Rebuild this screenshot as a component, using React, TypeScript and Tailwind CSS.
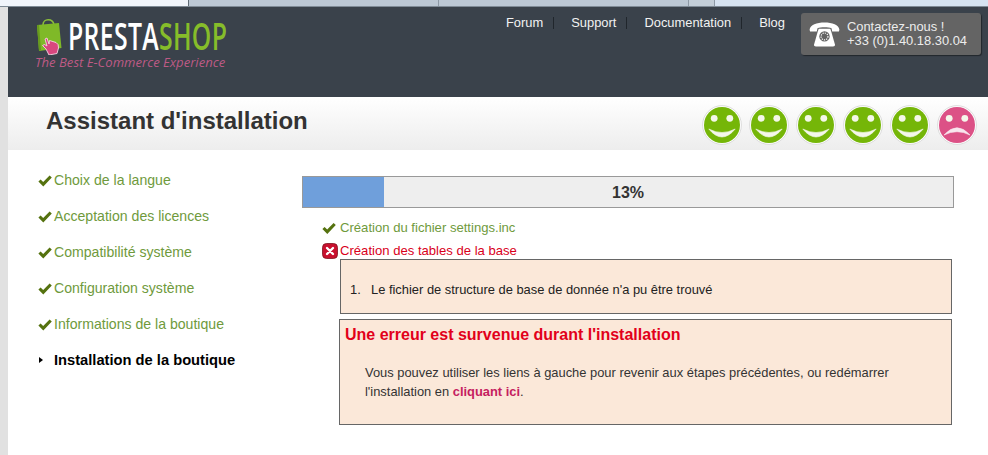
import React from "react";

const Check = ({ className = "" }: { className?: string }) => (
  <svg viewBox="0 0 14 12" className={className}>
    <path d="M0.4 6.6 L2.6 4.4 L5.2 7 L11.6 0.4 L13.8 2.4 L5.3 11.6 Z" fill="#55720f" />
  </svg>
);

const Face = ({ sad = false }: { sad?: boolean }) => (
  <svg viewBox="0 0 40 40" className="h-10 w-10 shrink-0">
    <circle cx="20" cy="20" r="19.4" fill="#ffffff" stroke="#d4d4d4" strokeWidth="0.8" />
    <circle cx="20" cy="20" r="18" fill={sad ? "#dc5186" : "#75b608"} />
    <circle cx="12.2" cy="13.3" r="3.4" fill="#f4f7ea" />
    <circle cx="27.8" cy="13.3" r="3.4" fill="#f4f7ea" />
    {sad ? (
      <path d="M7 30 Q20 15.4 33 30 Q20 23.4 7 30 Z" fill="#f8e6ee" stroke="#f8e6ee" strokeWidth="0.6" strokeLinejoin="round" />
    ) : (
      <path d="M6.8 24 Q20 31 33.2 24 Q20 40 6.8 24 Z" fill="#f4f7ea" stroke="#f4f7ea" strokeWidth="0.6" strokeLinejoin="round" />
    )}
  </svg>
);

const Bag = () => (
  <svg viewBox="0 0 30 38" className="h-[38px] w-[30px] shrink-0">
    <path d="M9 8 C9 1 19 1 20 8" fill="none" stroke="#8cbf3a" strokeWidth="1.6" />
    <path d="M3 8 L25 6 L27.5 31 L5 34 Z" fill="#7fb928" />
    <path d="M3 8 L5 8 L7 33 L5 34 Z" fill="#679a1d" />
    <path
      d="M11 22 L13 21 L15 27 L15.5 23.5 L22 25.5 Q25 27 24.5 31 L23 36.5 L15 38 L12 32 L8.5 28.5 L10.5 27.5 L13 29 Z"
      fill="#d9477f"
      stroke="#f4d6e2"
      strokeWidth="0.9"
    />
  </svg>
);

const Phone = () => (
  <svg viewBox="0 0 32 26" className="h-[25px] w-[31px] shrink-0">
    <path
      d="M0.5 8 C1 3 8 0.5 16 0.5 C24 0.5 31 3 31.5 8 L31 10 L24 10 L23.3 6.5 C20 5 12 5 8.7 6.5 L8 10 L1 10 Z"
      fill="#ffffff"
    />
    <path d="M10 7 L22 7 L23 10 L27 24 Q27 25.5 25 25.5 L7 25.5 Q5 25.5 5 24 L9 10 Z" fill="#ffffff" />
    <circle cx="16" cy="15" r="5.4" fill="#646464" />
    <circle cx="16" cy="15" r="3.6" fill="none" stroke="#ffffff" strokeWidth="1.2" strokeDasharray="1.4 1" />
  </svg>
);

const ErrorIcon = () => (
  <svg viewBox="0 0 16 16" className="h-4 w-4 shrink-0">
    <rect x="0.5" y="0.5" width="15" height="15" rx="4" fill="#c8102e" stroke="#7d1420" strokeWidth="0.8" />
    <path d="M5 5 L11 11 M11 5 L5 11" stroke="#ffffff" strokeWidth="2.4" strokeLinecap="round" />
  </svg>
);

const steps = [
  "Choix de la langue",
  "Acceptation des licences",
  "Compatibilité système",
  "Configuration système",
  "Informations de la boutique",
];

const nav = ["Forum", "Support", "Documentation", "Blog"];

export default function App() {
  return (
    <div className="flex h-[455px] w-[988px] flex-col overflow-hidden bg-white font-['Liberation_Sans',Arial,sans-serif]">
      {/* browser chrome leftover */}
      <div className="flex h-[7px] shrink-0 border-b border-[#7f8b96]">
        <div className="w-[188px] bg-[#f1f5fb]" />
        <div className="w-[250px] border-l border-[#5f6a74] bg-[#bcc8d4]" />
        <div className="w-[250px] border-l border-[#8d99a5] bg-[#bcc8d4]" />
        <div className="w-[27px] border-x border-[#8d99a5] bg-[#c3ced8]" />
        <div className="flex-1 bg-[#d6e3f1]" />
      </div>

      <div className="flex min-h-0 flex-1">
        <div className="w-2 shrink-0 bg-[#e1e1e1]" />
        <div className="flex min-w-0 flex-1 flex-col">
          {/* header */}
          <header className="flex h-[90px] shrink-0 bg-[#3a424b]">
            <div className="ml-[26px] mt-[10px] flex w-[204px] shrink-0 flex-col">
              <div className="flex h-[38px]">
                <Bag />
                <div className="ml-[4px] mt-[-1px] flex h-[38px] origin-left scale-x-[0.67] items-center whitespace-nowrap font-['Open_Sans',sans-serif] text-[37px] font-semibold leading-none tracking-[0.5px]">
                  <span className="text-white">PRESTA</span>
                  <span className="text-[#86bd2a]">SHOP</span>
                </div>
              </div>
              <div className="ml-px mt-0 whitespace-nowrap font-['Open_Sans',sans-serif] text-[13.1px] italic leading-[14px] text-[#bd5a85]">
                The Best E-Commerce Experience
              </div>
            </div>
            <nav className="ml-[268px] mt-[8px] flex h-[15px] items-center text-[12.9px] leading-[15px] text-[#f2f2f2]">
              {nav.map((n, i) => (
                <React.Fragment key={n}>
                  {i > 0 && <span className="ml-[10px] mr-[17px] h-[12px] w-px bg-[#20262c]" />}
                  <span>{n}</span>
                </React.Fragment>
              ))}
            </nav>
            <div className="ml-[16px] mt-[6px] flex h-[42px] w-[180px] items-center rounded-[3px] bg-[#646464] pl-[8px] shadow-[1px_1px_1px_#22272c]">
              <Phone />
              <div className="ml-[7px] whitespace-nowrap text-[12.9px] leading-[14px] text-[#ececec]">
                <div>Contactez-nous !</div>
                <div>+33 (0)1.40.18.30.04</div>
              </div>
            </div>
          </header>

          {/* title band */}
          <div className="flex h-[53px] shrink-0 items-center bg-gradient-to-b from-white to-[#ededed] pl-[38px] pr-[11px]">
            <h1 className="mt-[-6px] flex-1 text-[24px] font-bold leading-7 text-[#333333]">Assistant d'installation</h1>
            <div className="mt-[3px] flex gap-[7px]">
              <Face />
              <Face />
              <Face />
              <Face />
              <Face />
              <Face sad />
            </div>
          </div>

          {/* body */}
          <div className="flex min-h-0 flex-1">
            <aside className="w-[294px] shrink-0 pl-[30px] pt-[13px]">
              {steps.map((s) => (
                <div key={s} className="flex h-9 items-center text-[14.1px] text-[#6f9a3c]">
                  <Check className="mr-[2px] h-[12px] w-[14px] shrink-0" />
                  <span>{s}</span>
                </div>
              ))}
              <div className="mt-[-1px] flex h-9 items-center text-[14.7px] font-bold text-black">
                <span className="ml-[1px] mr-[11px] h-0 w-0 border-y-[3px] border-l-[4px] border-y-transparent border-l-black" />
                <span>Installation de la boutique</span>
              </div>
            </aside>

            <main className="flex-1 pt-[26px]">
              <div className="flex h-[32px] w-[652px] overflow-hidden border border-[#999999] bg-[#eeeeee]">
                <div className="w-[81px] shrink-0 bg-[#6f9fdb]" />
                <div className="flex-1 pr-[81px] text-center text-[16px] font-bold leading-[31px] text-[#333333]">13%</div>
              </div>

              <div className="ml-[20px] mt-[10px] flex h-[20px] items-center text-[13.1px] text-[#6f9a3c]">
                <Check className="mr-[4px] h-[13px] w-[14px] shrink-0" />
                <span>Création du fichier settings.inc</span>
              </div>
              <div className="ml-[20px] mt-[3px] flex h-[20px] items-center text-[13.1px] text-[#d9001b]">
                <ErrorIcon />
                <span className="ml-[2px]">Création des tables de la base</span>
              </div>

              <div className="ml-[38px] mt-[-2px] flex h-[55px] w-[612px] border border-[#666666] bg-[#fbe8d9] pl-[9px] pt-[21px] text-[12.9px] leading-[18px] text-[#222222]">
                <span className="w-[21px] shrink-0">1.</span>
                <span>Le fichier de structure de base de donnée n'a pu être trouvé</span>
              </div>

              <div className="ml-[37px] mt-[5px] h-[106px] w-[613px] border border-[#666666] bg-[#fbe8d9] pl-[5px] pt-[6px]">
                <h2 className="text-[16px] font-bold leading-[18px] text-[#e2001a]">Une erreur est survenue durant l'installation</h2>
                <p className="ml-[20px] mt-[19px] whitespace-nowrap text-[12.9px] leading-[19px] text-[#333333]">
                  Vous pouvez utiliser les liens à gauche pour revenir aux étapes précédentes, ou redémarrer
                  <br />
                  l'installation en <span className="font-bold text-[#c5215f]">cliquant ici</span>.
                </p>
              </div>
            </main>
          </div>
        </div>
      </div>
    </div>
  );
}
